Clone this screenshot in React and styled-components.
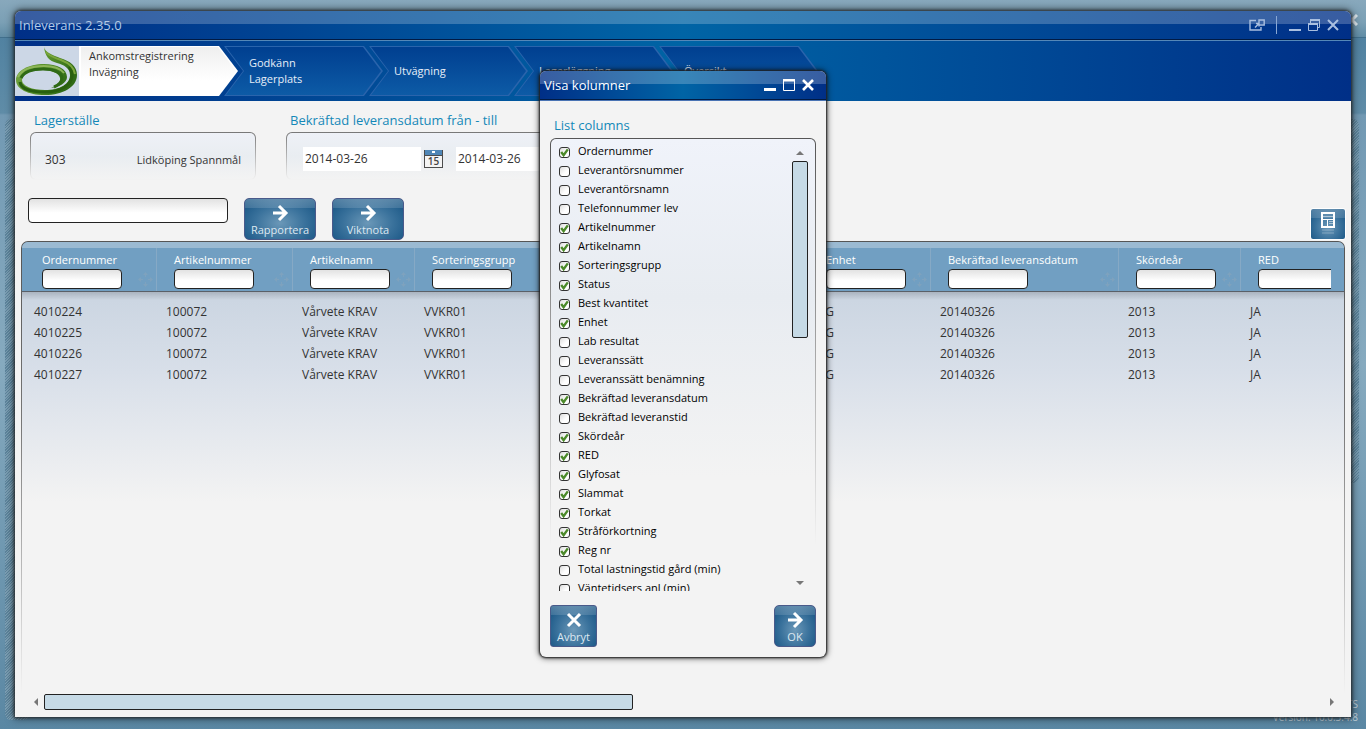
import React, { useState } from "react";
import styled, { createGlobalStyle } from "styled-components";

const steps = [
    ["Ankomstregistrering", "Invägning"],
    ["Godkänn", "Lagerplats"],
    ["Utvägning"],
    ["Lagerläggning"],
    ["Översikt"],
];

const columns = [
    { key: "order", title: "Ordernummer", width: 132 },
    { key: "article", title: "Artikelnummer", width: 136 },
    { key: "name", title: "Artikelnamn", width: 122 },
    { key: "group", title: "Sorteringsgrupp", width: 150 },
    { key: "status", title: "Status", width: 122 },
    { key: "quantity", title: "Best kvantitet", width: 122 },
    { key: "unit", title: "Enhet", width: 122 },
    { key: "date", title: "Bekräftad leveransdatum", width: 188 },
    { key: "year", title: "Skördeår", width: 122 },
    { key: "red", title: "RED", width: 122 },
];

const rows = ["4010224", "4010225", "4010226", "4010227"].map((order) => ({
    order,
    article: "100072",
    name: "Vårvete KRAV",
    group: "VVKR01",
    unit: "KG",
    date: "20140326",
    year: "2013",
    red: "JA",
}));

const listColumns = [
    ["Ordernummer", true],
    ["Leverantörsnummer", false],
    ["Leverantörsnamn", false],
    ["Telefonnummer lev", false],
    ["Artikelnummer", true],
    ["Artikelnamn", true],
    ["Sorteringsgrupp", true],
    ["Status", true],
    ["Best kvantitet", true],
    ["Enhet", true],
    ["Lab resultat", false],
    ["Leveranssätt", false],
    ["Leveranssätt benämning", false],
    ["Bekräftad leveransdatum", true],
    ["Bekräftad leveranstid", false],
    ["Skördeår", true],
    ["RED", true],
    ["Glyfosat", true],
    ["Slammat", true],
    ["Torkat", true],
    ["Stråförkortning", true],
    ["Reg nr", true],
    ["Total lastningstid gård (min)", false],
    ["Väntetidsers anl (min)", false],
];

const Logo = () => (
    <svg width="64" height="50" viewBox="0 0 64 50" aria-hidden="true">
        <defs>
            <linearGradient id="ring" x1="0" y1="0" x2="1" y2="0.4">
                <stop offset="0" stopColor="#82ad4c" />
                <stop offset="0.5" stopColor="#5a922c" />
                <stop offset="1" stopColor="#2f6a16" />
            </linearGradient>
        </defs>
        <path d="M29 1C30 6 37 9 45 12C55 15 62 20 62 29C62 41 48 49 30 49C13 49 1 43 1 34C1 25 13 18 29 18C42 18 52 23 52 31C52 37 44 41 36 42C43 39 46 35 45 32C44 27 37 24 28 24C16 24 7 28 7 34C7 40 17 44 30 44C45 44 55 38 55 29C55 22 49 19 42 17C34 15 30 10 29 1Z" fill="url(#ring)" />
        <path d="M5 36C6 43 17 46 30 46C46 46 57 39 57 29C57 26 56 23 54 21" fill="none" stroke="#29600f" strokeWidth="3" />
        <path d="M6 32C9 26 18 23 28 23C39 23 47 27 47 32C47 36 44 39 39 41" fill="none" stroke="#2f6a16" strokeWidth="3" />
        <path d="M3 31C7 23 17 20 29 20C38 20 45 22 49 27" fill="none" stroke="#8db659" strokeWidth="2" />
        <path d="M31 6C34 10 40 12 46 14C54 17 59 21 60 28" fill="none" stroke="#7ba63c" strokeWidth="2" />
    </svg>
);

const ArrowIcon = () => (
    <svg width="18" height="18" viewBox="0 0 18 18" fill="none" stroke="#fff" strokeWidth="3" aria-hidden="true">
        <path d="M2 9H14M8 2L15 9L8 16" />
    </svg>
);

const CrossIcon = () => (
    <svg width="18" height="18" viewBox="0 0 18 18" fill="none" stroke="#fff" strokeWidth="3" aria-hidden="true">
        <path d="M3 3L15 15M15 3L3 15" />
    </svg>
);

const CalendarIcon = () => (
    <svg width="19" height="18" viewBox="0 0 19 18" aria-hidden="true">
        <rect x="0.5" y="0.5" width="18" height="17" fill="#f4f4f4" stroke="#4c4c4c" />
        <rect x="1" y="0" width="17" height="5" fill="#4f86b6" />
        <path d="M0 5.5H19" stroke="#4c4c4c" />
        <rect x="8" y="1" width="3" height="2" fill="#fff" />
        <text x="9.5" y="15" textAnchor="middle" fontSize="10" fontWeight="600" fontFamily="Open Sans, sans-serif" fill="#444">15</text>
    </svg>
);

const MoveIcon = () => (
    <svg width="15" height="15" viewBox="0 0 15 15" fill="#8aa5bb" opacity="0.55" aria-hidden="true">
        <path d="M7.5 0L10 3H5ZM7 3H8V5H7ZM7.5 15L5 12H10ZM7 10H8V12H7ZM0 7.5L3 5V10ZM3 7H5V8H3ZM15 7.5L12 10V5ZM10 7H12V8H10Z" />
    </svg>
);

const LayoutIcon = () => (
    <svg width="16" height="26" viewBox="0 0 16 26" aria-hidden="true">
        <rect x="2" y="2" width="12" height="14" fill="none" stroke="#fff" strokeWidth="2" />
        <path d="M3 8.5H13M7.5 9V15" stroke="#fff" />
        <path d="M3 5.5H13M9 10.5H13M9 12.5H13" stroke="#fff" strokeOpacity="0.5" />
        <path d="M2 19H14M2 22H14" stroke="#fff" strokeOpacity="0.15" strokeWidth="2" />
    </svg>
);

const CheckMark = () => (
    <svg width="11" height="11" viewBox="0 0 11 11" fill="none" stroke="#4c8a2b" strokeWidth="2.4" aria-hidden="true">
        <path d="M2.2 5L4.6 8.2L8.8 2.4" />
    </svg>
);

const Triangle = ({ d }) => (
    <svg width="8" height="8" viewBox="0 0 8 8" fill="#777" aria-hidden="true">
        <path d={d} />
    </svg>
);

const CheckItem = ({ label, defaultChecked }) => {
    const [checked, setChecked] = useState(defaultChecked);

    return (
        <CheckLabel>
            <CheckBox>
                <input type="checkbox" checked={checked} onChange={() => setChecked(!checked)} />
                {checked && <CheckMark />}
            </CheckBox>
            {label}
        </CheckLabel>
    );
};

const ColumnDialog = () => (
    <Overlay>
        <Dialog role="dialog" aria-labelledby="dialog-title">
            <DialogTitle>
                <h2 id="dialog-title">Visa kolumner</h2>
                <TitleButton aria-label="Minimera">
                    <svg width="12" height="12" viewBox="0 0 12 12"><path d="M0 10.5H12" stroke="#fff" strokeWidth="3" /></svg>
                </TitleButton>
                <TitleButton aria-label="Maximera">
                    <svg width="12" height="12" viewBox="0 0 12 12" fill="none" stroke="#fff"><path d="M0.5 0.5H11.5V11.5H0.5ZM0 2H12" /><path d="M0 1H12" strokeWidth="2" /></svg>
                </TitleButton>
                <TitleButton aria-label="Stäng">
                    <svg width="12" height="12" viewBox="0 0 12 12" stroke="#fff" strokeWidth="2.6"><path d="M1 1L11 11M11 1L1 11" /></svg>
                </TitleButton>
            </DialogTitle>
            <DialogBody>
                <SectionTitle as="h3">List columns</SectionTitle>
                <ListPanel>
                    <List>
                        {listColumns.map(([label, checked]) => (
                            <li key={label}><CheckItem label={label} defaultChecked={checked} /></li>
                        ))}
                    </List>
                    <VerticalScroll>
                        <Triangle d="M4 2L8 6H0Z" />
                        <VerticalThumb />
                        <Triangle d="M4 6L8 2H0Z" />
                    </VerticalScroll>
                </ListPanel>
                <DialogActions>
                    <ActionButton $width={47} $square><CrossIcon />Avbryt</ActionButton>
                    <ActionButton $width={42}><ArrowIcon />OK</ActionButton>
                </DialogActions>
            </DialogBody>
        </Dialog>
    </Overlay>
);

export default function App() {
    return (
        <Desktop>
            <GlobalStyle />
            <Backdrop />
            <SideStrip $side="left" />
            <SideStrip $side="right" />
            <CornerClose aria-label="Stäng programmet">
                <svg width="12" height="12" viewBox="0 0 12 12" stroke="#dce6ec" strokeWidth="3"><path d="M1 1L11 11M11 1L1 11" /></svg>
            </CornerClose>
            <Version>CTS<br />Version: 10.0.3.4.8</Version>

            <Window>
                <TitleBar>
                    <h1>Inleverans 2.35.0</h1>
                    <WindowButtons>
                        <TitleButton aria-label="Öppna i nytt fönster">
                            <svg width="16" height="12" viewBox="0 0 16 12" fill="none" stroke="#a9bfe0" strokeWidth="1.4">
                                <path d="M7 1.5H1V11H12V8M10 1H15.2V6H10ZM6 8.5L10 4.5M7 4.5H10V7.5" />
                            </svg>
                        </TitleButton>
                        <Divider />
                        <TitleButton aria-label="Minimera">
                            <svg width="12" height="12" viewBox="0 0 12 12"><path d="M0 11H12" stroke="#a9bfe0" strokeWidth="2" /></svg>
                        </TitleButton>
                        <TitleButton aria-label="Återställ">
                            <svg width="12" height="12" viewBox="0 0 12 12" fill="none" stroke="#a9bfe0">
                                <path d="M0.5 4.5H9.5V11.5H0.5ZM2.5 4V0.5H11.5V8.5H10" /><path d="M0 5H10M2 1H12" strokeWidth="2" />
                            </svg>
                        </TitleButton>
                        <TitleButton aria-label="Stäng">
                            <svg width="12" height="12" viewBox="0 0 12 12" stroke="#a9bfe0" strokeWidth="2"><path d="M1 1L11 11M11 1L1 11" /></svg>
                        </TitleButton>
                    </WindowButtons>
                </TitleBar>

                <StepBar>
                    <LogoBox><Logo /></LogoBox>
                    {steps.map((lines, i) => (
                        <Step key={lines[0]} href="#" $active={i === 0}>
                            {lines.map((line) => <span key={line}>{line}</span>)}
                        </Step>
                    ))}
                </StepBar>

                <Content>
                    <Filters>
                        <FilterGroup $width={226}>
                            <SectionTitle>Lagerställe</SectionTitle>
                            <FadePanel>
                                <span>303</span>
                                <small>Lidköping Spannmål</small>
                            </FadePanel>
                        </FilterGroup>
                        <FilterGroup $width={520}>
                            <SectionTitle>Bekräftad leveransdatum från - till</SectionTitle>
                            <DatePanel>
                                <DateInput aria-label="Från" defaultValue="2014-03-26" />
                                <CalendarButton aria-label="Välj från-datum"><CalendarIcon /></CalendarButton>
                                <DateInput aria-label="Till" defaultValue="2014-03-26" />
                                <CalendarButton aria-label="Välj till-datum"><CalendarIcon /></CalendarButton>
                            </DatePanel>
                        </FilterGroup>
                    </Filters>

                    <Toolbar>
                        <SearchInput aria-label="Sök" />
                        <ActionButton $width={72}><ArrowIcon />Rapportera</ActionButton>
                        <ActionButton $width={72}><ArrowIcon />Viktnota</ActionButton>
                        <LayoutButton aria-label="Visa kolumner"><LayoutIcon /></LayoutButton>
                    </Toolbar>

                    <Grid>
                        <GridViewport>
                            <Table>
                                <colgroup>
                                    {columns.map((c) => <Col key={c.key} $width={c.width} />)}
                                </colgroup>
                                <thead>
                                    <tr>
                                        {columns.map((c) => (
                                            <th key={c.key}>
                                                <label htmlFor={"filter-" + c.key}>{c.title}</label>
                                                <HeaderFilter>
                                                    <input id={"filter-" + c.key} />
                                                    <MoveIcon />
                                                </HeaderFilter>
                                            </th>
                                        ))}
                                    </tr>
                                </thead>
                                <tbody>
                                    {rows.map((row) => (
                                        <tr key={row.order}>
                                            {columns.map((c) => <td key={c.key}>{row[c.key]}</td>)}
                                        </tr>
                                    ))}
                                </tbody>
                            </Table>
                        </GridViewport>
                    </Grid>

                    <HorizontalScroll>
                        <Triangle d="M2 4L6 0V8Z" />
                        <ScrollTrack><HorizontalThumb /></ScrollTrack>
                        <Triangle d="M6 4L2 0V8Z" />
                    </HorizontalScroll>
                </Content>
            </Window>

            <ColumnDialog />
        </Desktop>
    );
}

const GlobalStyle = createGlobalStyle`
  * {
    box-sizing: border-box;
  }

  body {
    margin: 0;
    font-family: "Open Sans", "Noto Sans", sans-serif;
    font-size: 12px;
    color: #333;
  }

  h1, h2, h3, ul {
    margin: 0;
    padding: 0;
    font-weight: 400;
  }

  input, button {
    font-family: inherit;
    font-size: 12px;
  }

  button {
    cursor: pointer;
  }
`;

const Desktop = styled.div`
  position: relative;
  display: flex;
  min-height: 100vh;
  padding: 11px 15px 12px;
  overflow: hidden;
  background: linear-gradient(#4a7d9e, #5f8ca7 113px, #7299b3 115px, #86aabf 50%, #5a87a3);
`;

const Backdrop = styled.div`
  position: absolute;
  top: 0;
  left: 0;
  right: 0;
  height: 38px;
  background: linear-gradient(#88a8bc, #7ba0b5 60%, #608ca5);
  border-bottom: 1px solid #416f8c;
`;

const SideStrip = styled.div`
  position: absolute;
  top: 119px;
  ${(p) => p.$side}: ${(p) => (p.$side === "left" ? "5px" : "7px")};
  width: 24px;
  bottom: ${(p) => (p.$side === "left" ? "9px" : "246px")};
  border-radius: 6px;
  background: repeating-linear-gradient(135deg, #5c849c 0 1px, #7b9eb3 1px 2px);
`;

const CornerClose = styled.button`
  position: absolute;
  top: 13px;
  right: 8px;
  padding: 0;
  border: 0;
  background: none;
`;

const Version = styled.div`
  position: absolute;
  right: 8px;
  bottom: 5px;
  text-align: right;
  font-size: 10px;
  line-height: 13px;
  color: #c3d3de;
`;

const Window = styled.main`
  position: relative;
  flex: 1;
  min-width: 0;
  display: flex;
  flex-direction: column;
  border-radius: 6px 6px 0 0;
  background: #f3f3f3;
  box-shadow: 0 0 3px 1px #222c, 0 0 9px 1px #0009;
`;

const TitleBar = styled.header`
  display: flex;
  align-items: center;
  justify-content: space-between;
  height: 30px;
  padding: 0 12px 2px 4px;
  border-radius: 6px 6px 0 0;
  border-bottom: 1px solid #5588b8;
  box-shadow: inset 0 -1px #001a44;
  background: linear-gradient(#ffffff38, #ffffff38) 0 0 / 100% 13px no-repeat,
    linear-gradient(90deg, #002f87, #0064a5 50%, #002f87);

  h1 {
    font-size: 13px;
    line-height: 18px;
    color: #b4cbe6;
  }
`;

const WindowButtons = styled.div`
  display: flex;
  align-items: center;
  gap: 7px;
`;

const Divider = styled.span`
  width: 1px;
  height: 18px;
  margin: 0 5px 0 4px;
  background: #8aa8d4;
`;

const TitleButton = styled.button`
  display: flex;
  padding: 0;
  border: 0;
  background: none;
`;

const StepBar = styled.nav`
  display: flex;
  height: 60px;
  padding: 5px 0;
  background: linear-gradient(90deg, #002f87, #0064a5 50%, #002f87);
`;

const LogoBox = styled.div`
  width: 64px;
  height: 50px;
  background: #ccd7e6;
`;

const Step = styled.a`
  position: relative;
  isolation: isolate;
  display: flex;
  flex-direction: column;
  justify-content: ${(p) => (p.$active ? "flex-start" : "center")};
  width: 159px;
  padding: ${(p) => (p.$active ? "2px 0 0 10px" : "0 0 0 25px")};
  margin-left: ${(p) => (p.$active ? "0" : "-14px")};
  font-size: 11px;
  line-height: 16px;
  color: ${(p) => (p.$active ? "#333" : "#e6eef8")};
  text-decoration: none;

  &::before,
  &::after {
    content: "";
    position: absolute;
    inset: 0;
    z-index: -2;
    background: ${(p) => (p.$active ? "#fff" : "#2a64ac")};
    clip-path: ${(p) =>
        p.$active
            ? "polygon(0 0, 140px 0, 100% 50%, 140px 100%, 0 100%)"
            : "polygon(0 0, 140px 0, 100% 50%, 140px 100%, 0 100%, 19px 50%)"};
  }

  &::after {
    inset: 1px 2px;
    z-index: -1;
    background: ${(p) => (p.$active ? "linear-gradient(#efefef, #fff 70%)" : "linear-gradient(#003f90, #0d5ba6)")};
    clip-path: ${(p) =>
        p.$active
            ? "polygon(0 0, 137px 0, 100% 50%, 137px 100%, 0 100%)"
            : "polygon(0 0, 137px 0, 100% 50%, 137px 100%, 0 100%, 18px 50%)"};
  }
`;

const Content = styled.div`
  flex: 1;
  display: flex;
  flex-direction: column;
  padding: 9px 6px 7px;
`;

const Filters = styled.div`
  display: flex;
  gap: 30px;
  padding-left: 9px;
`;

const FilterGroup = styled.section`
  width: ${(p) => p.$width}px;
`;

const SectionTitle = styled.h2`
  padding-left: 4px;
  font-size: 13px;
  line-height: 20px;
  color: #1488b8;
`;

const FadePanel = styled.div`
  display: flex;
  align-items: center;
  justify-content: space-between;
  height: 48px;
  margin-top: 2px;
  padding: 6px 14px 0;
  border: 1px solid transparent;
  border-radius: 6px;
  background: linear-gradient(#eef1f7, #e9edf1 50%, #f3f3f3) padding-box,
    linear-gradient(#777, #f3f3f3) border-box;

  small {
    font-size: 11px;
  }
`;

const DatePanel = styled(FadePanel)`
  justify-content: flex-start;
`;

const DateInput = styled.input`
  width: 118px;
  height: 24px;
  padding: 0 2px 2px;
  margin-left: 2px;
  border: 0;
  background: #fff;
  color: #333;
`;

const CalendarButton = styled.button`
  display: flex;
  margin: 0 11px 0 3px;
  padding: 0;
  border: 0;
  background: none;
`;

const Toolbar = styled.div`
  display: flex;
  gap: 16px;
  height: 43px;
  margin-top: 18px;
  padding-left: 7px;
`;

const SearchInput = styled.input`
  width: 200px;
  height: 25px;
  padding: 0 6px;
  border: 1px solid #222;
  border-radius: 4px;
  background: linear-gradient(#e2e2e2, #fff 60%);
`;

const ActionButton = styled.button`
  display: flex;
  flex-direction: column;
  align-items: center;
  width: ${(p) => p.$width}px;
  height: 42px;
  padding: 5px 0 0;
  border: 1px solid #4a5a8a;
  border-radius: ${(p) => (p.$square ? "3px" : "5px")};
  background: linear-gradient(#ffffff44, #ffffff22) 0 0 / 100% 9px no-repeat,
    radial-gradient(ellipse at 50% 60%, #6b98b8, #3a729c 50%, #125080);
  line-height: 16px;
  white-space: nowrap;
  color: #dde8f1;
  font-size: 11px;

  svg {
    flex: none;
  }
`;

const LayoutButton = styled.button`
  display: flex;
  justify-content: center;
  align-self: flex-end;
  width: 36px;
  height: 32px;
  margin: 0 -1px 1px auto;
  padding: 2px 0 0;
  border: 1px solid #fff;
  border-radius: 3px;
  background: linear-gradient(#ffffff44, #ffffff22) 0 0 / 100% 9px no-repeat,
    radial-gradient(ellipse at 50% 60%, #6b98b8, #3a729c 50%, #125080);
`;

const Grid = styled.div`
  flex: 1;
  padding: 0 13px 0 3px;
  border: 1px solid transparent;
  border-radius: 7px 7px 0 0;
  background: linear-gradient(#9bbad2, #9bbad2) 0 0 / 100% 6px no-repeat padding-box,
    linear-gradient(#719fc2 49px, #5a6068 49px 50px, #aab4c0 50px, #ccd6e2 58px, #d8dfe9 130px, #f3f3f3 260px) padding-box,
    linear-gradient(#555, #777 40%, #f3f3f3) border-box;
`;

const GridViewport = styled.div`
  overflow: hidden;
`;

const Table = styled.table`
  width: max-content;
  table-layout: fixed;
  border-collapse: collapse;

  th {
    height: 50px;
    padding: 9px 0 0 17px;
    text-align: left;
    vertical-align: top;
    font-size: 11px;
    font-weight: 400;
    color: #fff;
    background: linear-gradient(#86a9c5, #86a9c5) 100% 6px / 1px 43px no-repeat;
  }

  th label {
    display: block;
    line-height: 18px;
    white-space: nowrap;
  }

  td {
    height: 21px;
    padding: 0 0 0 9px;
    line-height: 20px;
    white-space: nowrap;
  }

  tbody tr:first-child td {
    height: 30px;
    padding-top: 10px;
  }
`;

const Col = styled.col`
  width: ${(p) => p.$width}px;
`;

const HeaderFilter = styled.div`
  display: flex;
  align-items: center;
  justify-content: space-between;
  padding-right: 4px;

  input {
    width: 80px;
    height: 20px;
    padding: 0 4px;
    border: 1px solid #222;
    border-radius: 4px;
    background: linear-gradient(#e2e2e2, #fff 60%);
  }
`;

const HorizontalScroll = styled.div`
  display: flex;
  align-items: center;
  gap: 4px;
  padding: 0 9px 0 11px;
`;

const ScrollTrack = styled.div`
  flex: 1;
`;

const HorizontalThumb = styled.div`
  width: 46%;
  height: 16px;
  border: 1px solid #222;
  border-radius: 2px;
  background: #c6dae6;
`;

const Overlay = styled.div`
  position: absolute;
  inset: 0;
  display: grid;
  place-items: center;
  padding-bottom: 1px;
`;

const Dialog = styled.section`
  width: 286px;
  border-radius: 6px;
  background: #f3f3f3;
  box-shadow: 0 0 2px 1px #222, 0 0 6px 1px #000a;
`;

const DialogTitle = styled.header`
  display: flex;
  align-items: center;
  gap: 7px;
  height: 30px;
  padding: 0 12px 2px 4px;
  border-radius: 6px 6px 0 0;
  border-bottom: 1px solid #4a74b4;
  box-shadow: inset 0 -1px #001a44;
  background: linear-gradient(#ffffff38, #ffffff38) 0 0 / 100% 13px no-repeat,
    linear-gradient(90deg, #002f87, #0064a5 50%, #002f87);

  h2 {
    flex: 1;
    font-size: 13px;
    line-height: 18px;
    color: #fff;
  }
`;

const DialogBody = styled.div`
  padding: 14px 10px 10px;
`;

const ListPanel = styled.div`
  display: flex;
  justify-content: space-between;
  height: 453px;
  margin-top: 3px;
  padding: 2px 7px 0 8px;
  overflow: hidden;
  border: 1px solid transparent;
  border-bottom: 0;
  border-radius: 6px 6px 0 0;
  background: linear-gradient(#f0f3fa, #e8ecf1 35%, #f3f3f3 75%) padding-box,
    linear-gradient(#555, #999 40%, #f3f3f3 90%) border-box;
`;

const List = styled.ul`
  list-style: none;
`;

const CheckLabel = styled.label`
  display: flex;
  gap: 8px;
  font-size: 11px;
  line-height: 19px;
  white-space: nowrap;
  color: #000;
`;

const CheckBox = styled.span`
  position: relative;
  width: 11px;
  padding-top: 6px;

  input {
    appearance: none;
    display: block;
    width: 11px;
    height: 11px;
    margin: 0;
    border: 1px solid #333;
    border-radius: 3px;
    background: linear-gradient(135deg, #ddd, #fff 60%);
  }

  svg {
    position: absolute;
    top: 6px;
    left: 0;
    pointer-events: none;
  }
`;

const VerticalScroll = styled.div`
  display: flex;
  flex-direction: column;
  align-items: center;
  padding: 8px 0 4px;
`;

const VerticalThumb = styled.div`
  width: 16px;
  height: 177px;
  margin: 4px 0 auto;
  border: 1px solid #222;
  border-radius: 2px;
  background: #c6dae6;
`;

const DialogActions = styled.div`
  display: flex;
  justify-content: space-between;
  margin-top: 14px;
`;
